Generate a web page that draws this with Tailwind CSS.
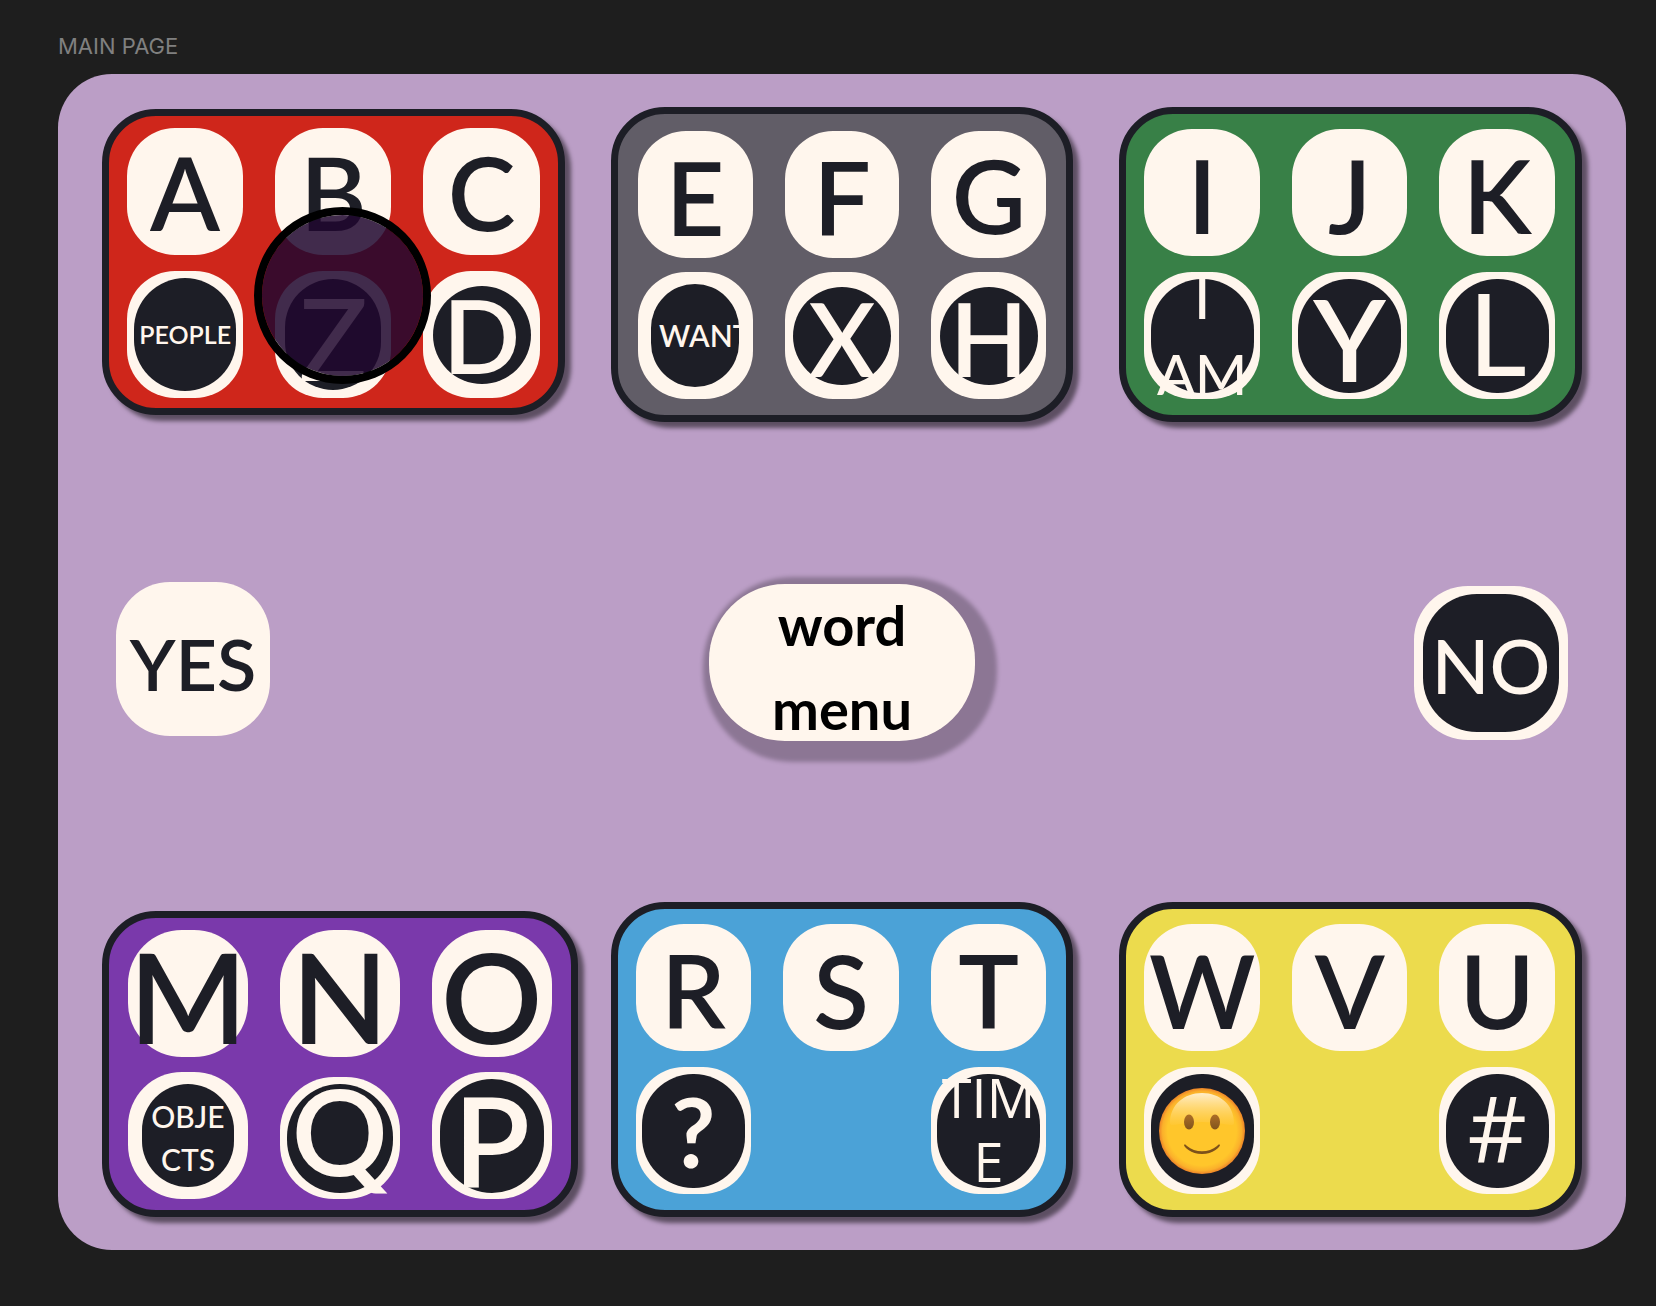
<!DOCTYPE html>
<html lang="en">

<head>
    <meta charset="UTF-8">
    <meta name="viewport" content="width=device-width, initial-scale=1.0">
    <title>Main Page</title>
    <script src="https://cdn.jsdelivr.net/npm/@tailwindcss/browser@4"></script>
</head>

<body class="min-h-screen bg-[#1e1e1e] pt-8 pb-14 pl-[58px] pr-[30px] font-['Lato',sans-serif] text-[#1d1e26]">
    <h1 class="h-[42px] font-['Inter',sans-serif] text-[22px] leading-7 text-[#808080]">MAIN PAGE</h1>

    <main class="rounded-[54px] bg-[#bb9ec6] px-11 py-[33px]">
        <!-- Top panels -->
        <div class="grid grid-cols-3 items-start gap-[46px]">
            <!-- A B C D -->
            <section class="relative mt-[2px] grid grid-cols-3 gap-x-8 gap-y-4 rounded-[54px] border-7 border-[#1d1e26] bg-[#cf261b] px-[18px] pt-3 pb-[10px] shadow-[6px_6px_4px_rgba(0,0,0,0.5)]">
                <button class="flex h-[127px] items-center justify-center rounded-[48px] bg-[#fff6ed] text-[102px] leading-none font-semibold">A</button>
                <button class="flex h-[127px] items-center justify-center rounded-[48px] bg-[#fff6ed] text-[102px] leading-none font-semibold">B</button>
                <button class="flex h-[127px] items-center justify-center rounded-[48px] bg-[#fff6ed] text-[102px] leading-none font-semibold">C</button>
                <button class="flex h-[127px] items-center justify-center rounded-[48px] bg-[#fff6ed]">
                    <span class="flex h-[113px] w-[102px] items-center justify-center rounded-[51px] bg-[#1d1e26] text-[25px] font-semibold text-[#fff6ed]">PEOPLE</span>
                </button>
                <button class="flex h-[127px] items-center justify-center rounded-[48px] bg-[#fff6ed]">
                    <span class="flex h-[111px] w-24 items-center justify-center rounded-[48px] bg-[#1d1e26] pt-1 text-[114px] leading-none font-medium text-[#fff6ed]">Z</span>
                </button>
                <button class="flex h-[127px] items-center justify-center rounded-[48px] bg-[#fff6ed]">
                    <span class="flex size-[98px] items-center justify-center rounded-full bg-[#1d1e26] text-[102px] leading-none font-semibold text-[#fff6ed]">D</span>
                </button>
                <!-- Gaze pointer -->
                <div class="absolute top-[91px] left-[145px] size-[177px] rounded-full border-8 border-black bg-[#20072f]/85 bg-clip-padding"></div>
            </section>

            <!-- E F G H -->
            <section class="grid grid-cols-3 gap-x-8 gap-y-[14px] rounded-[54px] border-7 border-[#1d1e26] bg-[#615d67] px-5 pt-[17px] pb-4 shadow-[6px_6px_4px_rgba(0,0,0,0.5)]">
                <button class="flex h-[127px] items-center justify-center rounded-[48px] bg-[#fff6ed] pt-1 text-[102px] leading-none font-semibold">E</button>
                <button class="flex h-[127px] items-center justify-center rounded-[48px] bg-[#fff6ed] pt-1 text-[102px] leading-none font-semibold">F</button>
                <button class="flex h-[127px] items-center justify-center rounded-[48px] bg-[#fff6ed] text-[102px] leading-none font-semibold">G</button>
                <button class="flex h-[127px] items-center justify-center rounded-[48px] bg-[#fff6ed]">
                    <span class="flex h-[103px] w-[88px] items-center rounded-[44px] bg-[#1d1e26] pl-2 text-[30px] font-semibold text-[#fff6ed]">WANT</span>
                </button>
                <button class="flex h-[127px] items-center justify-center rounded-[48px] bg-[#fff6ed]">
                    <span class="flex size-[98px] items-center justify-center rounded-full bg-[#1d1e26] pt-1 text-[102px] leading-none font-semibold text-[#fff6ed]">X</span>
                </button>
                <button class="flex h-[127px] items-center justify-center rounded-[48px] bg-[#fff6ed]">
                    <span class="flex size-[98px] items-center justify-center rounded-full bg-[#1d1e26] pt-1 text-[102px] leading-none font-semibold text-[#fff6ed]">H</span>
                </button>
            </section>

            <!-- I J K L -->
            <section class="grid grid-cols-3 gap-x-8 gap-y-4 rounded-[54px] border-7 border-[#1d1e26] bg-[#388047] pt-[15px] pr-5 pb-4 pl-[18px] shadow-[6px_6px_4px_rgba(0,0,0,0.5)]">
                <button class="flex h-[127px] items-center justify-center rounded-[48px] bg-[#fff6ed] pt-1 text-[102px] leading-none font-semibold">I</button>
                <button class="flex h-[127px] items-center justify-center rounded-[48px] bg-[#fff6ed] pt-1 text-[102px] leading-none font-semibold">J</button>
                <button class="flex h-[127px] items-center justify-center rounded-[48px] bg-[#fff6ed] pt-1 text-[102px] leading-none font-semibold">K</button>
                <button class="flex h-[127px] items-center justify-center rounded-[48px] bg-[#fff6ed]">
                    <span class="flex h-[114px] w-[103px] items-center justify-center rounded-[51px] bg-[#1d1e26] text-[56px] leading-[76px] font-medium text-[#fff6ed]">I<br>AM</span>
                </button>
                <button class="flex h-[127px] items-center justify-center rounded-[48px] bg-[#fff6ed]">
                    <span class="flex h-[114px] w-[103px] items-center justify-center rounded-[51px] bg-[#1d1e26] pt-1 text-[114px] leading-none font-semibold text-[#fff6ed]">Y</span>
                </button>
                <button class="flex h-[127px] items-center justify-center rounded-[48px] bg-[#fff6ed]">
                    <span class="flex h-[114px] w-[103px] items-center justify-center rounded-[51px] bg-[#1d1e26] pb-2 text-[114px] leading-none text-[#fff6ed]">L</span>
                </button>
            </section>
        </div>

        <!-- Yes / word menu / No -->
        <div class="mt-[162px] mb-[161px] flex h-[157px] items-center justify-between px-[14px]">
            <button class="mb-2 flex size-[154px] items-center justify-center rounded-[54px] bg-[#fff6ed] pt-2 text-[72px] font-semibold">YES</button>
            <button class="flex h-[157px] w-[266px] items-center justify-center rounded-[76px] bg-[#fff6ed] pt-2 text-[56px] leading-[84px] font-bold text-black shadow-[8px_7px_4px_14px_rgba(0,0,0,0.25)]">word<br>menu</button>
            <button class="flex size-[154px] items-center justify-center rounded-[54px] bg-[#fff6ed]">
                <span class="flex h-[138px] w-[136px] items-center justify-center rounded-[54px] bg-[#1d1e26] pt-1 text-[76px] font-medium text-[#fff6ed]">NO</span>
            </button>
        </div>

        <!-- Bottom panels -->
        <div class="grid grid-cols-3 items-end gap-[46px]">
            <!-- M N O P Q -->
            <section class="-mr-[13px] grid grid-cols-3 gap-x-8 gap-y-[15px] rounded-[54px] border-7 border-[#1d1e26] bg-[#7a39ab] px-[19px] pt-3 pb-[11px] shadow-[6px_6px_4px_rgba(0,0,0,0.5)]">
                <button class="flex h-[127px] items-center justify-center rounded-[54px] bg-[#fff6ed] pt-1 text-[126px] leading-none font-semibold">M</button>
                <button class="flex h-[127px] items-center justify-center rounded-[54px] bg-[#fff6ed] pt-1 text-[126px] leading-none font-semibold">N</button>
                <button class="flex h-[127px] items-center justify-center rounded-[54px] bg-[#fff6ed] pt-1 text-[126px] leading-none font-semibold">O</button>
                <button class="flex h-[127px] items-center justify-center rounded-[54px] bg-[#fff6ed]">
                    <span class="flex h-[103px] w-[92px] items-center justify-center rounded-[46px] bg-[#1d1e26] pt-1 text-[30px] leading-[43px] font-medium text-[#fff6ed]">OBJE<br>CTS</span>
                </button>
                <button class="flex h-[122px] items-center justify-center self-end rounded-[54px] bg-[#fff6ed]">
                    <span class="flex h-[109px] w-[106px] items-center justify-center rounded-full bg-[#1d1e26] pb-4 text-[120px] leading-none font-semibold text-[#fff6ed]">Q</span>
                </button>
                <button class="flex h-[127px] items-center justify-center rounded-[54px] bg-[#fff6ed]">
                    <span class="flex h-[114px] w-[104px] items-center justify-center rounded-[52px] bg-[#1d1e26] pt-2 text-[126px] leading-none font-semibold text-[#fff6ed]">P</span>
                </button>
            </section>

            <!-- R S T -->
            <section class="grid grid-cols-3 gap-x-8 gap-y-4 rounded-[54px] border-7 border-[#1d1e26] bg-[#4ba2d7] pt-[15px] pr-5 pb-4 pl-[18px] shadow-[6px_6px_4px_rgba(0,0,0,0.5)]">
                <button class="flex h-[127px] items-center justify-center rounded-[48px] bg-[#fff6ed] pt-1 text-[102px] leading-none font-semibold">R</button>
                <button class="flex h-[127px] items-center justify-center rounded-[48px] bg-[#fff6ed] pt-1 text-[102px] leading-none font-semibold">S</button>
                <button class="flex h-[127px] items-center justify-center rounded-[48px] bg-[#fff6ed] pt-1 text-[102px] leading-none font-semibold">T</button>
                <button class="flex h-[127px] items-center justify-center rounded-[48px] bg-[#fff6ed]">
                    <span class="flex h-[114px] w-[103px] items-center justify-center rounded-[51px] bg-[#1d1e26] text-[96px] leading-none font-bold text-[#fff6ed]">?</span>
                </button>
                <button class="col-start-3 flex h-[127px] items-center justify-center rounded-[48px] bg-[#fff6ed]">
                    <span class="flex h-[114px] w-[103px] items-center justify-center rounded-[51px] bg-[#1d1e26] pb-1 font-['Open_Sans',sans-serif] text-[54px] leading-16 text-[#fff6ed]">TIM<br>E</span>
                </button>
            </section>

            <!-- W V U -->
            <section class="grid grid-cols-3 gap-x-8 gap-y-4 rounded-[54px] border-7 border-[#1d1e26] bg-[#ecdb4d] pt-[15px] pr-5 pb-4 pl-[18px] shadow-[6px_6px_4px_rgba(0,0,0,0.5)]">
                <button class="flex h-[127px] items-center justify-center rounded-[48px] bg-[#fff6ed] pt-1 text-[102px] leading-none font-semibold">W</button>
                <button class="flex h-[127px] items-center justify-center rounded-[48px] bg-[#fff6ed] pt-1 text-[102px] leading-none font-semibold">V</button>
                <button class="flex h-[127px] items-center justify-center rounded-[48px] bg-[#fff6ed] pt-1 text-[102px] leading-none font-semibold">U</button>
                <button class="flex h-[127px] items-center justify-center rounded-[48px] bg-[#fff6ed]" aria-label="Feelings">
                    <span class="flex h-[114px] w-[103px] items-center justify-center rounded-[51px] bg-[#1d1e26]">
                        <svg class="size-[86px]" viewBox="0 0 86 86">
                            <defs>
                                <radialGradient id="face">
                                    <stop offset="0.8" stop-color="#ffc62b" />
                                    <stop offset="0.92" stop-color="#fbb02b" />
                                    <stop offset="1" stop-color="#ec8228" />
                                </radialGradient>
                                <linearGradient id="shine" x1="0" y1="0" x2="0" y2="1">
                                    <stop offset="0" stop-color="#ffeecb" />
                                    <stop offset="1" stop-color="#ffc93b" stop-opacity="0.5" />
                                </linearGradient>
                                <linearGradient id="eye" x1="0" y1="0" x2="0" y2="1">
                                    <stop offset="0" stop-color="#ad6e26" />
                                    <stop offset="1" stop-color="#81541d" />
                                </linearGradient>
                            </defs>
                            <circle cx="43" cy="43" r="43" fill="url(#face)" />
                            <path d="M11 35C11 17 25 5 43 5s32 12 32 30c0 5-11-1-32-1s-32 6-32 1z" fill="url(#shine)" />
                            <ellipse cx="30" cy="34" rx="5" ry="7.5" fill="url(#eye)" />
                            <ellipse cx="56" cy="34" rx="5" ry="7.5" fill="url(#eye)" />
                            <path d="M25 57c1-1 2 0 3 1 8 7 22 7 30 0 1-1 2-2 3-1 0 2-7 9-18 9s-18-7-18-9z" fill="#7d511a" />
                        </svg>
                    </span>
                </button>
                <button class="col-start-3 flex h-[127px] items-center justify-center rounded-[48px] bg-[#fff6ed]">
                    <span class="flex h-[114px] w-[103px] items-center justify-center rounded-[51px] bg-[#1d1e26] pb-2 font-['Open_Sans',sans-serif] text-[92px] leading-none text-[#fff6ed]">#</span>
                </button>
            </section>
        </div>
    </main>
</body>

</html>
